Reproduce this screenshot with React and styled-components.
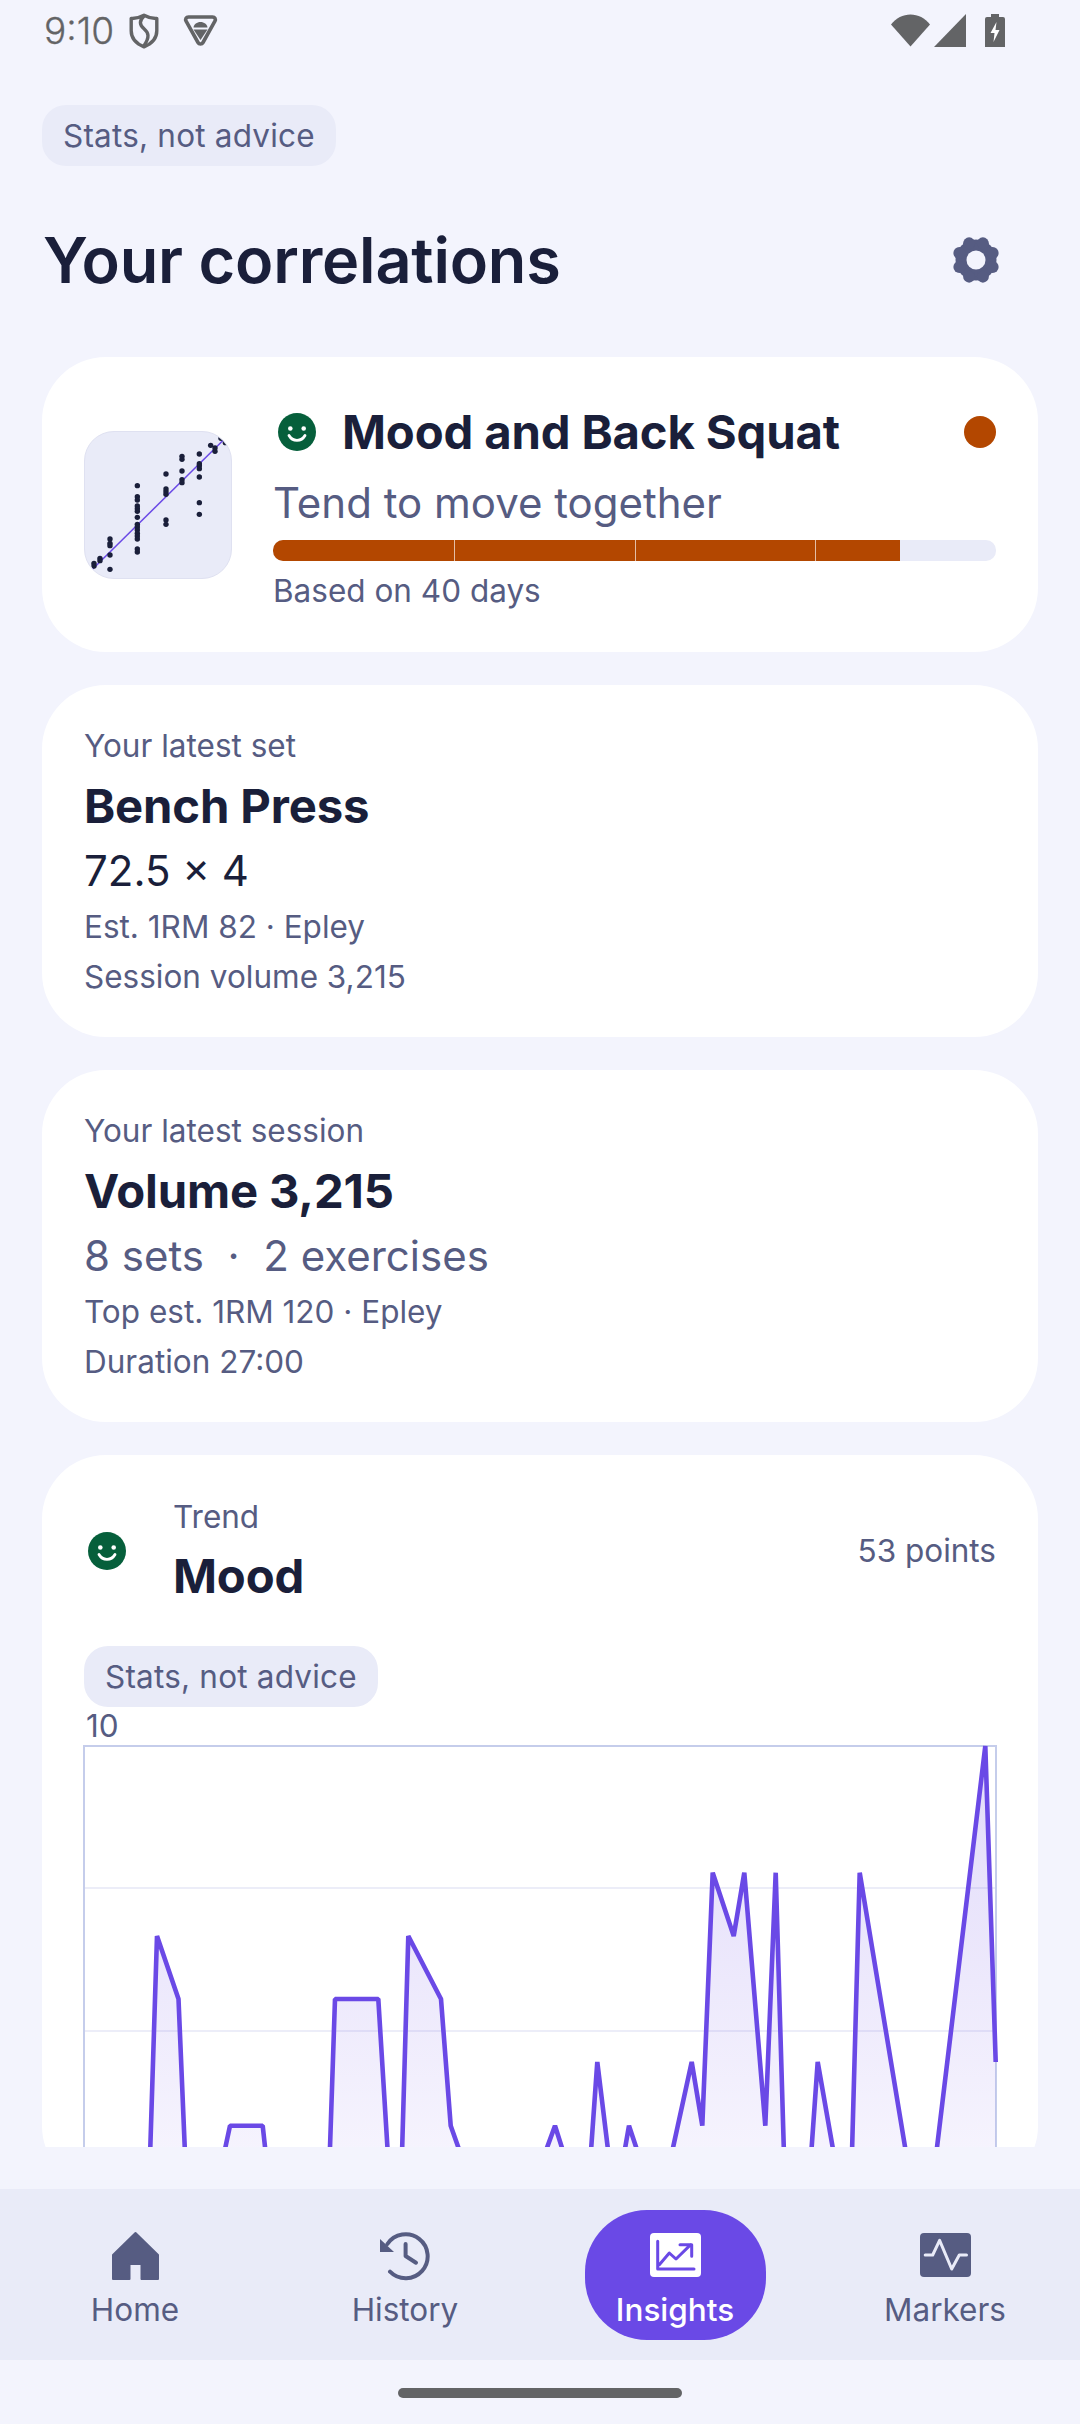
import React from "react";
import styled, { createGlobalStyle } from "styled-components";

const INK = "#1A1F3A";
const MUTED = "#565C82";
const TINT = "#E9EBF8";
const BG = "#F3F4FD";
const PURPLE = "#6A49E6";
const GREY = "#636466";

const Global = createGlobalStyle`
  html, body { margin: 0; padding: 0; background: ${BG}; }
  * { box-sizing: border-box; }
`;

const Screen = styled.div`
  width: 1080px; height: 2424px; background: ${BG}; overflow: hidden;
  display: flex; flex-direction: column;
  font-family: Inter, "Noto Sans", sans-serif; color: ${INK};
`;
const StatusBar = styled.div`
  height: 65px; flex: none; padding: 0 75px 4px 44px;
  display: flex; align-items: center; color: ${GREY};
`;
const Time = styled.span`font-size: 37px; font-weight: 300; line-height: 1; margin-right: 15px; -webkit-text-stroke: 0.3px ${GREY};`;
const StatusRight = styled.div`margin-left: auto; display: flex; align-items: flex-end;`;
const StatusIcon = styled.svg`display: block; flex: none; margin-left: ${p => p.$ml || 0}px;`;

const Scroll = styled.div`height: 2082px; flex: none; overflow: hidden; padding: 40px 42px 0;`;
const Chip = styled.div`
  display: inline-block; height: 61px; line-height: 61px; padding: 0 21px; border-radius: 24px;
  background: ${TINT}; color: ${MUTED}; font-size: 31.5px; letter-spacing: 0.2px; white-space: nowrap;
`;
const TitleRow = styled.div`
  height: 72px; margin: 58px 0 61px; display: flex; align-items: center; justify-content: space-between;
`;
const Title = styled.h1`margin: 0 0 0 1px; font-size: 63px; line-height: 72px; font-weight: 600; letter-spacing: -0.2px;`;
const Gear = styled.svg`display: block; margin-right: 38px; color: ${MUTED};`;

const Card = styled.section`
  background: #fff; border-radius: 64px; padding: ${p => p.$pad || "41px 42px 34px"};
  margin-bottom: 33px; height: ${p => p.$h}px;
`;
const MatchCard = styled(Card)`display: flex; gap: 41px; align-items: center;`;
const Thumb = styled.div`
  width: 148px; height: 148px; flex: none; border-radius: 30px; overflow: hidden;
  background: ${TINT}; border: 1px solid #DFE1F1;
`;
const MatchBody = styled.div`flex: 1; min-width: 0; display: flex; flex-direction: column; padding-top: 4px;`;
const MatchHead = styled.div`height: 60px; display: flex; align-items: center;`;
const MatchName = styled.div`font-size: 47.25px; font-weight: 700; line-height: 60px; margin-left: 26px; letter-spacing: -0.15px;`;
const Dot = styled.span`width: 32px; height: 32px; border-radius: 50%; background: #B34700; margin-left: auto;`;
const Face = styled.svg`display: block; flex: none; margin-left: ${p => p.$ml || 0}px;`;
const Lead = styled.div`font-size: 42px; line-height: 54px; color: ${p => p.$ink ? INK : MUTED}; margin-top: ${p => p.$mt || 0}px; white-space: pre;`;
const Small = styled.div`font-size: 31.5px; line-height: ${p => p.$lh || 50}px; color: ${MUTED}; margin-top: ${p => p.$mt || 0}px;`;
const Bar = styled.div`height: 21px; margin-top: 10px; border-radius: 10px; background: ${TINT}; overflow: hidden; position: relative;`;
const BarFill = styled.div`height: 100%; background: #B34700;`;
const BarTick = styled.span`position: absolute; top: 0; bottom: 0; width: 1px; background: rgba(255,255,255,.65);`;
const Heading = styled.div`font-size: 47.25px; font-weight: 700; line-height: 56px; margin-top: ${p => p.$mt || 12}px; letter-spacing: -0.15px;`;

const TrendHead = styled.div`display: flex; align-items: center; gap: 47px;`;
const TrendText = styled.div`flex: 1;`;
const Points = styled.div`font-size: 31.5px; color: ${MUTED};`;
const ChartChip = styled(Chip)`margin-top: 42px; display: inline-block; vertical-align: top;`;
const AxisLabel = styled.div`font-size: 31.5px; line-height: 34px; color: ${MUTED}; margin-top: 2px; padding-left: 2px;`;
const Chart = styled.svg`display: block; margin-top: 3px; overflow: visible;`;

const Nav = styled.nav`
  height: 171px; flex: none; margin-top: 42px; background: ${TINT};
  display: grid; grid-template-columns: repeat(4, 270px); align-items: center; justify-items: center;
`;
const NavItem = styled.div`
  width: 181px; height: 130px; border-radius: 62px; padding-top: 21px;
  display: flex; flex-direction: column; align-items: center;
  background: ${p => p.$active ? PURPLE : "transparent"};
  color: ${p => p.$active ? "#fff" : MUTED};
`;
const NavIcon = styled.svg`display: block; height: 50px; flex: none;`;
const NavLabel = styled.span`font-size: 31.5px; line-height: 42px; margin-top: 8px; font-weight: ${p => p.$active ? 500 : 400};`;
const Gesture = styled.div`flex: 1; display: flex; justify-content: center; padding-top: 28px;`;
const Handle = styled.div`width: 284px; height: 10px; border-radius: 5px; background: ${GREY};`;

const dots = [[162,550],[162,558],[180,535],[180,542],[210,568],[210,525],[210,497],[210,490],[210,477],
[292,317],[292,350],[292,360],[292,378],[292,386],[292,394],[292,412],[292,433],[292,441],[292,450],[292,460],[292,468],[292,477],[292,507],[292,516],
[378,282],[378,327],[378,335],[378,343],[378,420],[378,433],
[426,229],[426,238],[426,273],[426,299],[426,308],
[478,222],[478,251],[478,257],[478,266],[478,291],[478,368],[478,403],
[512,196],[525,204],[525,214],[543,175],[556,188]];

const line = [[84,2189],[149,2189],[157,1936],[178.5,1999],[186.5,2189],[216.5,2189],[230,2125.7],[262.7,2125.7],[269.6,2189],
[328.6,2189],[335,1999],[378.3,1999],[390,2189],[401,2189],[408.3,1936],[441,1999],[450.7,2125.7],[473,2189],
[532,2189],[555,2125.7],[575,2189],[588.3,2189],[597.3,2062],[612.8,2189],[618,2189],[629,2125.7],[650,2189],
[664,2189],[691.7,2062],[702.3,2125.7],[712.7,1872.7],[733.7,1936],[744.3,1872.7],[765.3,2125.7],[775.7,1872.7],[785,2189],
[808.7,2189],[817.7,2062],[840,2189],[851,2189],[859.7,1872.7],[912,2189],[932,2189],[985.3,1746],[995.7,2062]];
const linePts = line.map(p => p.join(",")).join(" ");
const areaPts = `${linePts} 995.7,2189`;

const Smile = ({ ml }) => (
  <Face $ml={ml} width="38" height="38" viewBox="0 0 38 38">
    <circle cx="19" cy="19" r="19" fill="#065F3B" />
    <circle cx="12.3" cy="15.5" r="2.3" fill="#fff" />
    <circle cx="25.7" cy="15.5" r="2.3" fill="#fff" />
    <path d="M11 22.5c1.8 3.2 4.6 4.8 8 4.8s6.2-1.6 8-4.8" fill="none" stroke="#fff" strokeWidth="2.8" strokeLinecap="round" />
  </Face>
);

const lobes = [22.5, 67.5, 112.5, 157.5, 202.5, 247.5, 292.5, 337.5].map(a => [
  24 + 18 * Math.cos((a * Math.PI) / 180),
  24 + 18 * Math.sin((a * Math.PI) / 180),
]);

const StatusBarView = () => (
  <StatusBar>
    <Time>9:10</Time>
    <StatusIcon width="30" height="36" viewBox="0 0 30 36">
      <path d="M15 2.2C10 5 6 5.6 2.2 5.4v12.4c0 7.6 5.2 13 12.8 16 7.6-3 12.8-8.4 12.8-16V5.4C24 5.6 20 5 15 2.2z" fill="none" stroke={GREY} strokeWidth="3.4" strokeLinejoin="round" />
      <path d="M15 3c-5 5-4.6 8.8 0 12.8 4.6 4 6 8 0 17" fill="none" stroke={GREY} strokeWidth="3.4" />
    </StatusIcon>
    <StatusIcon $ml="24" width="35" height="33" viewBox="0 0 35 33">
      <path d="M5.5 3h24c2.4 0 3.6 2.3 2.4 4.2L20 28.5c-1.1 1.9-3.9 1.9-5 0L3.1 7.2C1.9 5.3 3.1 3 5.5 3z" fill="none" stroke={GREY} strokeWidth="3.6" strokeLinejoin="round" />
      <path d="M10.5 13.5c.4-3.2 3.4-5.5 7-5.5s6.6 2.3 7 5.5z" fill={GREY} />
      <path d="M10.5 15.5h14L17.5 26z" fill={GREY} />
    </StatusIcon>
    <StatusRight>
      <StatusIcon width="39" height="33" viewBox="0 0 39 33">
        <path d="M0 10.5C5 4 12 .5 19.5 .5S34 4 39 10.5L19.5 32.5z" fill={GREY} />
      </StatusIcon>
      <StatusIcon $ml="4" width="32" height="33" viewBox="0 0 32 33">
        <path d="M0 33L32 0v33z" fill={GREY} />
      </StatusIcon>
      <StatusIcon $ml="19" width="20" height="33" viewBox="0 0 20 33">
        <path d="M6 0h8v3h4a2 2 0 0 1 2 2v28H0V5a2 2 0 0 1 2-2h4z" fill={GREY} />
        <path d="M11.5 8L5.5 19h4l-1 9 6-12h-4z" fill="#fff" />
      </StatusIcon>
    </StatusRight>
  </StatusBar>
);

const App = () => (
  <Screen>
    <Global />
    <StatusBarView />
    <Scroll>
      <Chip>Stats, not advice</Chip>
      <TitleRow>
        <Title>Your correlations</Title>
        <Gear width="48" height="48" viewBox="0 0 48 48">
          <g fill="currentColor">
            <circle cx="24" cy="24" r="20.5" />
            {lobes.map(([x, y], i) => <circle key={i} cx={x} cy={y} r="6" />)}
          </g>
          <circle cx="24" cy="24" r="9.5" fill={BG} />
        </Gear>
      </TitleRow>

      <MatchCard $h={295} $pad="0 42px">
        <Thumb>
          <svg width="146" height="146" viewBox="0 0 146 146" style={{ display: "block" }}>
            <line x1="6.7" y1="138" x2="142" y2="4.5" stroke={PURPLE} strokeWidth="1.5" />
            {dots.map(([x, y], i) => (
              <circle key={i} cx={(x - 132) / 3 - 1} cy={(y - 153) / 3 - 1} r="2.7" fill={INK} />
            ))}
          </svg>
        </Thumb>
        <MatchBody>
          <MatchHead>
            <Smile ml={5} />
            <MatchName>Mood and Back Squat</MatchName>
            <Dot />
          </MatchHead>
          <Lead $mt={14}>Tend to move together</Lead>
          <Bar>
            <BarFill style={{ width: "86.7%" }} />
            <BarTick style={{ left: "25%" }} />
            <BarTick style={{ left: "50%" }} />
            <BarTick style={{ left: "75%" }} />
          </Bar>
          <Small $lh={40} $mt={10}>Based on 40 days</Small>
        </MatchBody>
      </MatchCard>

      <Card $h={352}>
        <Small $lh={40}>Your latest set</Small>
        <Heading>Bench Press</Heading>
        <Lead $ink $mt={10}>72.5 × 4</Lead>
        <Small $mt={4}>Est. 1RM 82 · Epley</Small>
        <Small>Session volume 3,215</Small>
      </Card>

      <Card $h={352}>
        <Small $lh={40}>Your latest session</Small>
        <Heading>Volume 3,215</Heading>
        <Lead $mt={10}>{"8 sets  ·  2 exercises"}</Lead>
        <Small $mt={4}>Top est. 1RM 120 · Epley</Small>
        <Small>Duration 27:00</Small>
      </Card>

      <Card $pad="42px 42px 0">
        <TrendHead>
          <Smile ml={4} />
          <TrendText>
            <Small $lh={40}>Trend</Small>
            <Heading $mt={11}>Mood</Heading>
          </TrendText>
          <Points>53 points</Points>
        </TrendHead>
        <ChartChip>Stats, not advice</ChartChip>
        <AxisLabel>10</AxisLabel>
        <Chart width="916" height="444" viewBox="84 1746 916 444">
          <defs>
            <linearGradient id="area" gradientUnits="userSpaceOnUse" x1="0" y1="1746" x2="0" y2="2190">
              <stop offset="0" stopColor={PURPLE} stopOpacity="0.2" />
              <stop offset="1" stopColor={PURPLE} stopOpacity="0.05" />
            </linearGradient>
          </defs>
          <line x1="84" x2="996" y1="1888" y2="1888" stroke="#ECEDF8" strokeWidth="2" />
          <line x1="84" x2="996" y1="2031" y2="2031" stroke="#ECEDF8" strokeWidth="2" />
          <path d="M84 2190V1746H996V2190" fill="none" stroke="#C5CDEB" strokeWidth="2" />
          <polygon points={areaPts} fill="url(#area)" />
          <polyline points={linePts} fill="none" stroke={PURPLE} strokeWidth="4.6" strokeLinejoin="bevel" />
        </Chart>
      </Card>
    </Scroll>

    <Nav>
      <NavItem>
        <NavIcon width="47" viewBox="0 0 47 50">
          <path d="M23.5 2L46 24v24H29.5V33h-12v15H1V24z" fill="currentColor" stroke="currentColor" strokeWidth="2" strokeLinejoin="round" />
        </NavIcon>
        <NavLabel>Home</NavLabel>
      </NavItem>
      <NavItem>
        <NavIcon width="50" viewBox="0 0 50 50">
          <path d="M10 40.7A22 22 0 1 0 7.4 13" fill="none" stroke="currentColor" strokeWidth="4" strokeLinecap="round" />
          <path d="M0 8v13h14z" fill="currentColor" />
          <path d="M25.6 13V25L36 31.7" fill="none" stroke="currentColor" strokeWidth="4" strokeLinecap="round" strokeLinejoin="round" />
        </NavIcon>
        <NavLabel>History</NavLabel>
      </NavItem>
      <NavItem $active>
        <NavIcon width="51" viewBox="0 -2 51 50">
          <rect width="51" height="44" rx="4" fill="#fff" />
          <path d="M7.7 8.3V36H44M9.3 31.7L19.3 20l6.7 6 14.7-14.3M30 11.7h11.7v11.6" fill="none" stroke={PURPLE} strokeWidth="3" strokeLinecap="round" strokeLinejoin="round" />
        </NavIcon>
        <NavLabel $active>Insights</NavLabel>
      </NavItem>
      <NavItem>
        <NavIcon width="51" viewBox="0 -2 51 50">
          <rect width="51" height="44" rx="4" fill="currentColor" />
          <path d="M5.2 22h7.5l6.9-14.700L31.7 36l7.600-14h7.200" fill="none" stroke={TINT} strokeWidth="3" strokeLinecap="round" strokeLinejoin="round" />
        </NavIcon>
        <NavLabel>Markers</NavLabel>
      </NavItem>
    </Nav>
    <Gesture><Handle /></Gesture>
  </Screen>
);

export default App;
